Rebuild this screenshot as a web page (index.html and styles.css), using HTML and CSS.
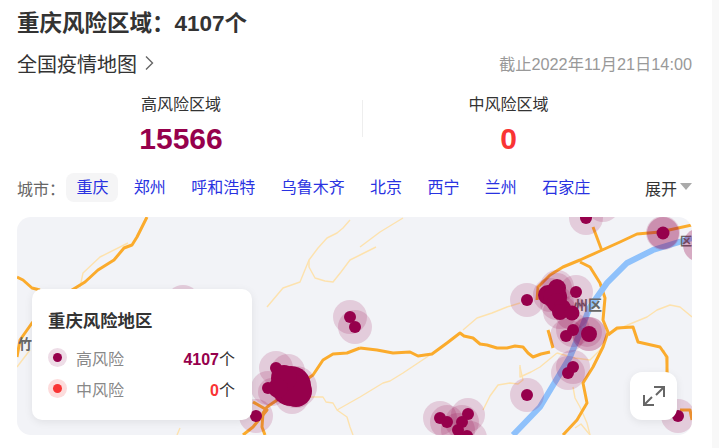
FILE: index.html
```html
<!DOCTYPE html>
<html>
    <head>
        <meta charset="UTF-8">
        <title>重庆风险区域</title>
        <link rel="stylesheet" href="styles.css">
    </head>

    <body>
        <div class="main-container">
            <h1 class="title">重庆风险区域：<span class="title-count">4107</span>个</h1>

            <div class="sub-row">
                <a class="map-link">全国疫情地图
                    <svg class="chevron" width="10" height="16" viewBox="0 0 10 16"><path d="M2 1.5 L8.5 8 L2 14.5" fill="none" stroke="#666" stroke-width="1.4"/></svg>
                </a>
                <span class="date">截止2022年11月21日14:00</span>
            </div>

            <div class="stats-container">
                <div class="stat stat-high">
                    <p class="stat-label">高风险区域</p>
                    <p class="stat-value high-color">15566</p>
                </div>
                <div class="stat-divider"></div>
                <div class="stat stat-mid">
                    <p class="stat-label">中风险区域</p>
                    <p class="stat-value mid-color">0</p>
                </div>
            </div>

            <div class="city-row">
                <span class="city-label">城市：</span>
                <a class="city-item active">重庆</a>
                <a class="city-item">郑州</a>
                <a class="city-item">呼和浩特</a>
                <a class="city-item">乌鲁木齐</a>
                <a class="city-item">北京</a>
                <a class="city-item">西宁</a>
                <a class="city-item">兰州</a>
                <a class="city-item">石家庄</a>
                <span class="expand">展开<i class="expand-arrow"></i></span>
            </div>

            <div class="map-container">
                <svg class="map" width="675" height="218" viewBox="17 217 675 218">
                    <g class="road-minor">
                        <path d="M350 220 L343 228 L337 233 L327 238 L318 248 L309 260 L309 267 L315 278 L325 281 L333 282 L341 272 L350 260 L362 254 L376 247"/>
                        <path d="M360 247 L380 232 L403 218"/>
                        <path d="M309 260 L300 282 L283 288 L267 307"/>
                        <path d="M309 397 L323 397 L326 402 L333 403 L337 410 L347 417 L350 427 L353 435"/>
                        <path d="M337 410 L360 397 L383 383 L390 381 L403 373 L427 357 L460 333"/>
                        <path d="M463 330 L477 318 L492 313 L507 307 L520 303"/>
                        <path d="M520 365 L520 377 L531 372 L540 367 L557 353"/>
                        <path d="M483 410 L490 396 L498 385 L510 383 L518 384 L523 380 L520 367"/>
                        <path d="M610 333 L630 324 L647 317 L657 310 L670 305 L680 307 L692 317"/>
                        <path d="M664 350 L668 372"/>
                        <path d="M573 387 L575 398 L580 407 L587 423 L590 435"/>
                        <path d="M80 287 L83 273 L100 257 L128 243"/>
                        <path d="M17 367 L30 350"/>
                        <path d="M177 435 L180 428"/>
                        <path d="M557 353 L575 358 L590 360 L603 347"/>
                        <path d="M590 435 L581 424 L575 428"/>
                    </g>
                    <g class="road-major">
                        <path d="M147 217 L137 237 L132 245 L124 248 L114 260 L98 270 L85 282 L72 290 L32 323 L20 340 L17 357"/>
                        <path d="M17 277 L23 280 L32 288 L40 290"/>
                        <path d="M360 348 L347 353 L333 354 L323 360 L313 375 L267 407 L263 413 L262 427 L265 435"/>
                        <path d="M253 402 L267 410 L253 427 L243 435"/>
                        <path d="M360 348 L377 350 L393 353 L410 352 L418 356 L432 354 L447 343 L460 333 L464 336 L473 338 L480 344 L487 345 L497 348 L507 348 L515 346 L523 347 L528 353 L533 357 L541 354 L550 352"/>
                        <path d="M692 225 L660 232 L637 234 L620 242 L600 251 L580 260 L563 267 L550 275 L538 287 L537 300"/>
                        <path d="M580 262 L590 267 L600 283 L605 298 L603 320 L608 332 L603 347 L593 367 L583 383 L587 403 L577 420 L563 435"/>
                        <path d="M608 335 L617 328 L633 327 L638 342 L660 347 L667 357 L667 373"/>
                        <path d="M593 227 L602 251"/>
                        <path d="M548 330 L550 337 L553 348"/>
                        <path d="M680 410 L690 410 L692 420"/>
                    </g>
                    <path class="road-rail" d="M513 435 L540 407 L570 357 L577 340 L590 307 L607 283 L627 263 L653 250 L692 238"/>

                    <text class="map-text" x="18" y="349">竹</text>
                    <text class="map-text" x="574" y="310">州区</text>
                    <text class="map-text map-text-small" x="680" y="246">区</text>

                    <g class="halo">
                        <circle cx="183" cy="302" r="17"/>
                        <circle cx="350" cy="317" r="17"/>
                        <circle cx="355" cy="327" r="17"/>
                        <circle cx="276" cy="368" r="17"/>
                        <circle cx="288" cy="371" r="17"/>
                        <circle cx="296" cy="387" r="21"/>
                        <circle cx="292" cy="397" r="17"/>
                        <circle cx="268" cy="388" r="17"/>
                        <circle cx="272" cy="392" r="14"/>
                        <circle cx="256" cy="416" r="17"/>
                        <circle cx="586" cy="218" r="17"/>
                        <circle cx="603" cy="205" r="17"/>
                        <circle cx="663" cy="233" r="17"/>
                        <circle cx="663" cy="233" r="16"/>
                        <circle cx="663" cy="233" r="16"/>
                        <circle cx="700" cy="245" r="17"/>
                        <circle cx="700" cy="245" r="17"/>
                        <circle cx="527" cy="300" r="17"/>
                        <circle cx="557" cy="287" r="17"/>
                        <circle cx="550" cy="295" r="17"/>
                        <circle cx="557" cy="288" r="15"/>
                        <circle cx="557" cy="303" r="17"/>
                        <circle cx="560" cy="312" r="17"/>
                        <circle cx="576" cy="292" r="17"/>
                        <circle cx="572" cy="313" r="17"/>
                        <circle cx="567" cy="336" r="17"/>
                        <circle cx="573" cy="330" r="17"/>
                        <circle cx="589" cy="334" r="17"/>
                        <circle cx="589" cy="334" r="17"/>
                        <circle cx="587" cy="332" r="15"/>
                        <circle cx="568" cy="373" r="17"/>
                        <circle cx="573" cy="367" r="17"/>
                        <circle cx="527" cy="395" r="17"/>
                        <circle cx="440" cy="418" r="17"/>
                        <circle cx="447" cy="422" r="17"/>
                        <circle cx="468" cy="415" r="17"/>
                        <circle cx="462" cy="422" r="17"/>
                        <circle cx="458" cy="430" r="17"/>
                        <circle cx="470" cy="438" r="17"/>
                        <circle cx="678" cy="416" r="17"/>
                    </g>
                    <g class="dot">
                        <circle cx="350" cy="317" r="6"/>
                        <circle cx="355" cy="327" r="6"/>
                        <circle cx="276" cy="368" r="6"/>
                        <circle cx="291" cy="386" r="20"/>
                        <circle cx="296" cy="391" r="16"/>
                        <circle cx="284" cy="378" r="13"/>
                        <circle cx="278" cy="388" r="10"/>
                        <circle cx="268" cy="388" r="6"/>
                        <circle cx="256" cy="416" r="6"/>
                        <circle cx="586" cy="218" r="6"/>
                        <circle cx="663" cy="233" r="6.5"/>
                        <circle cx="527" cy="300" r="6"/>
                        <circle cx="557" cy="288" r="9"/>
                        <circle cx="548" cy="295" r="10"/>
                        <circle cx="555" cy="297" r="12"/>
                        <circle cx="557" cy="303" r="10"/>
                        <circle cx="562" cy="308" r="9"/>
                        <circle cx="560" cy="312" r="8"/>
                        <circle cx="572" cy="313" r="7.5"/>
                        <circle cx="576" cy="292" r="6"/>
                        <circle cx="566" cy="336" r="6"/>
                        <circle cx="573" cy="330" r="6"/>
                        <circle cx="589" cy="334" r="8"/>
                        <circle cx="568" cy="373" r="6"/>
                        <circle cx="573" cy="367" r="6"/>
                        <circle cx="527" cy="395" r="6"/>
                        <circle cx="440" cy="418" r="6"/>
                        <circle cx="447" cy="422" r="6"/>
                        <circle cx="468" cy="414" r="6"/>
                        <circle cx="462" cy="422" r="6"/>
                        <circle cx="458" cy="430" r="6"/>
                        <circle cx="467" cy="436" r="6"/>
                        <circle cx="678" cy="416" r="6"/>
                    </g>
                </svg>

                <div class="legend-card">
                    <h2 class="legend-title">重庆风险地区</h2>
                    <div class="legend-row">
                        <span class="legend-icon icon-high"></span>
                        <span class="legend-name">高风险</span>
                        <span class="legend-count"><b class="high-color">4107</b>个</span>
                    </div>
                    <div class="legend-row">
                        <span class="legend-icon icon-mid"></span>
                        <span class="legend-name">中风险</span>
                        <span class="legend-count"><b class="mid-color">0</b>个</span>
                    </div>
                </div>

                <button class="fullscreen-button">
                    <svg width="24" height="24" viewBox="0 0 24 24" fill="none" stroke="#666" stroke-width="2">
                        <path d="M12 3 H22 V13 M22 3 L14 11"/>
                        <path d="M12 21 H2 V11 M2 21 L10 13"/>
                    </svg>
                </button>
            </div>
        </div>
        <div class="side-strip"></div>
    </body>
</html>
```

FILE: styles.css
```css
html, body {
    height: 100%;
}

body {
    display: flex;
    margin: 0;
    overflow: hidden;
    background-color: white;
    font-family: "Liberation Sans", "Noto Sans CJK SC", sans-serif;
    color: #333;
}

p, h1, h2 {
    margin: 0;
}

.main-container {
    width: 712px;
    box-sizing: border-box;
    padding: 0 20px 0 17px;
}

.side-strip {
    width: 7px;
    background-color: #f8f8f8;
}

.title {
    height: 48px;
    font-size: 22.5px;
    line-height: 48px;
    font-weight: bold;
    color: #333;
}

.sub-row {
    display: flex;
    justify-content: space-between;
    align-items: center;
    height: 30px;
}

.map-link {
    display: flex;
    align-items: center;
    column-gap: 7px;
    font-size: 20px;
    color: #333;
}

.date {
    font-size: 16.25px;
    color: #999;
}

.stats-container {
    display: flex;
    margin-top: 15px;
    height: 80px;
}

.stat {
    text-align: center;
}

.stat-high {
    width: 328px;
}

.stat-mid {
    width: 291px;
}

.stat-divider {
    width: 1px;
    height: 37px;
    margin: 7px 0 0 17px;
    background-color: #eee;
}

.stat-label {
    font-size: 16px;
    line-height: 24px;
    color: #333;
}

.stat-value {
    font-size: 30px;
    line-height: 44px;
    font-weight: bold;
}

.high-color {
    color: #96004c;
}

.mid-color {
    color: #f93434;
}

.city-row {
    display: flex;
    align-items: center;
    column-gap: 5.4px;
    height: 29px;
    font-size: 16px;
}

.city-label {
    flex-shrink: 0;
    margin-right: -4px;
    white-space: nowrap;
    color: #666;
}

.city-item {
    padding: 0 10px;
    line-height: 29px;
    border-radius: 8px;
    color: #2932e1;
}

.city-item.active {
    background-color: #f5f5f6;
}

.expand {
    display: flex;
    align-items: center;
    margin-left: auto;
    color: #333;
}

.expand-arrow {
    width: 0;
    height: 0;
    margin-left: 3px;
    margin-bottom: 3px;
    border-top: 7px solid #aaa;
    border-left: 6px solid transparent;
    border-right: 6px solid transparent;
}

.map-container {
    position: relative;
    margin-top: 15px;
    width: 675px;
    height: 218px;
    border-radius: 14px;
    overflow: hidden;
    background-color: #f2f3f7;
}

.map {
    display: block;
}

.road-major path {
    fill: none;
    stroke: #fbab2c;
    stroke-width: 3;
    stroke-linejoin: round;
}

.road-minor path {
    fill: none;
    stroke: #fde2ae;
    stroke-width: 1.4;
    stroke-linejoin: round;
}

.road-rail {
    fill: none;
    stroke: #8fc1fb;
    stroke-width: 6;
}

.map-text {
    font-size: 14px;
    font-weight: bold;
    fill: #666;
}

.map-text-small {
    font-size: 12px;
}

.halo circle {
    fill: rgba(150, 0, 76, 0.16);
}

.dot circle {
    fill: #96004c;
}

.legend-card {
    position: absolute;
    left: 15px;
    top: 72px;
    width: 220px;
    height: 131px;
    box-sizing: border-box;
    padding: 20px 17px 0 16px;
    border-radius: 10px;
    background-color: white;
    box-shadow: 0 2px 8px rgba(0, 0, 0, 0.08);
}

.legend-title {
    font-size: 17.4px;
    line-height: 24px;
    font-weight: bold;
    color: #333;
    margin-bottom: 9px;
}

.legend-row {
    display: flex;
    align-items: center;
    height: 31px;
    font-size: 16px;
}

.legend-icon {
    width: 9px;
    height: 9px;
    margin: 0 5px;
    border-radius: 50%;
}

.icon-high {
    background-color: #96004c;
    box-shadow: 0 0 0 5px #eedde7;
}

.icon-mid {
    background-color: #f93434;
    box-shadow: 0 0 0 5px #fddcdc;
}

.legend-name {
    margin-left: 9px;
    color: #888;
}

.legend-count {
    margin-left: auto;
    color: #333;
}

.fullscreen-button {
    position: absolute;
    right: 15px;
    bottom: 15px;
    display: flex;
    align-items: center;
    justify-content: center;
    width: 47px;
    height: 48px;
    padding: 0;
    border: none;
    border-radius: 12px;
    background-color: white;
    box-shadow: 0 2px 8px rgba(0, 0, 0, 0.08);
}
```
